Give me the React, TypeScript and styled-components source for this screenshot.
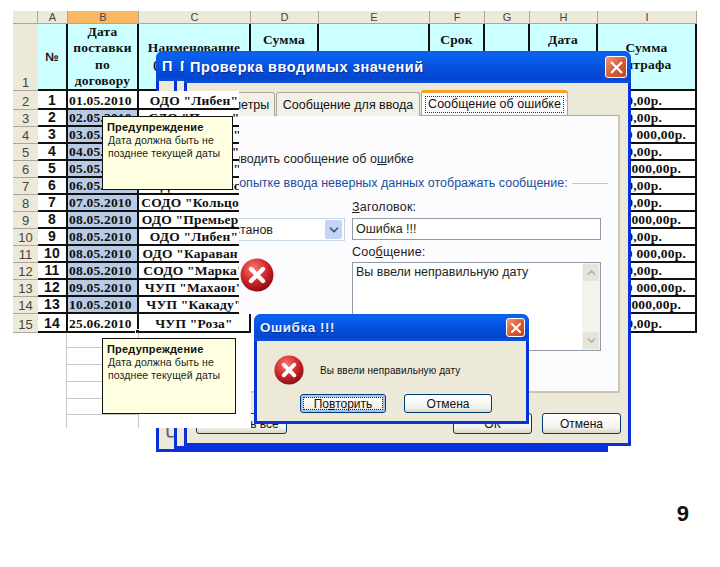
import React, { useId } from 'react';
import styled, { createGlobalStyle } from 'styled-components';
import { ChevronDown, ChevronUp, X } from 'lucide-react';

const GlobalStyle = createGlobalStyle`
  html, body { margin: 0; background: #fff; }
  * { box-sizing: border-box; }
`;

const UI_FONT = `"Liberation Sans", Arial, sans-serif`;
const CELL_FONT = `"Liberation Serif", "Times New Roman", serif`;

const Page = styled.div`
  width: 720px;
  height: 567px;
  padding: 11px 0 0 13px;
  display: flex;
  flex-direction: column;
  overflow: hidden;
  font-family: ${UI_FONT};
  color: #111;
`;

const Sheet = styled.div`
  display: grid;
  grid-template-columns: 25px 30px 71px 112px 68px 111px 55px 45px 68px 99px;
  grid-template-rows: 13px 67px 19px repeat(12, 17px) 19px 15px 17px 17px 17px 16px 13px;
  width: 684px;
`;

const ColHead = styled.div<{ $active?: boolean }>`
  background: ${(p) => (p.$active ? '#f8b962' : '#ece9d8')};
  border-right: 1px solid #aca899;
  border-bottom: 1px solid #aca899;
  font-size: 11px;
  line-height: 12px;
  text-align: center;
  color: #444;
`;

const RowHead = styled.div<{ $over?: boolean; $end?: boolean }>`
  position: ${(p) => (p.$over ? 'relative' : 'static')};
  z-index: ${(p) => (p.$over ? 3 : 'auto')};
  display: flex;
  align-items: flex-end;
  justify-content: center;
  background: #ece9d8;
  border-bottom: 1px solid #aca899;
  font-size: 13px;
  line-height: 15px;
  color: #444;
`;

const HeadCell = styled.div`
  display: flex;
  align-items: center;
  justify-content: center;
  background: #ccffff;
  border-right: 2px solid #111;
  border-bottom: 2px solid #111;
  padding: 0 1px;
  font: bold 13.5px/16.4px ${CELL_FONT};
  letter-spacing: 0.2px;
  text-align: center;
`;

const NumberHead = styled(HeadCell)`
  font: bold 12px/16px ${UI_FONT};
`;

const LowHead = styled(HeadCell)`
  padding-top: 5px;
`;

const Cell = styled.div<{ $over?: boolean; $clip?: boolean; $tone?: string; $plain?: boolean }>`
  position: ${(p) => (p.$over ? 'relative' : 'static')};
  z-index: ${(p) => (p.$over ? 3 : 'auto')};
  clip-path: ${(p) => (p.$clip ? 'inset(0 12px 0 0)' : 'none')};
  display: flex;
  align-items: flex-end;
  justify-content: center;
  background: ${(p) => p.$tone ?? '#fff'};
  border-right: 2px solid #111;
  border-bottom: 2px solid #111;
  font: ${(p) => (p.$plain ? 'bold 13.5px' : 'bold 13.5px')}/15px ${CELL_FONT};
  letter-spacing: 0.2px;
  white-space: nowrap;
`;

const IndexCell = styled(Cell)`
  font: bold 14px/15px ${UI_FONT};
`;

const DateCell = styled(Cell)`
  justify-content: flex-start;
  padding-left: 1px;
`;

const FineCell = styled(Cell)<{ $right: number }>`
  justify-content: flex-end;
  padding-right: ${(p) => p.$right}px;
`;

const BlankB = styled.div<{ $last?: boolean }>`
  grid-column: 3;
  position: relative;
  z-index: 3;
  background: #fff;
  margin-left: -2px;
  border-left: 1px solid #c8c8c8;
  border-right: 1px solid #c8c8c8;
  border-bottom: ${(p) => (p.$last ? 'none' : '1px solid #c8c8c8')};
`;

const BlankC = styled.div`
  position: relative;
  z-index: 3;
  background: #fff;
`;

const SelectionHandle = styled.span`
  position: absolute;
  right: -3px;
  bottom: -3px;
  width: 5px;
  height: 5px;
  background: #111;
  border: 1px solid #fff;
`;

const Footer = styled.div`
  margin-top: 74px;
  padding-right: 31px;
  text-align: right;
  font: bold 22px/24px ${UI_FONT};
  color: #111;
`;

const Win = styled.div<{ $left: number; $top: number; $w: number; $h: number; $z: number }>`
  position: absolute;
  left: ${(p) => p.$left}px;
  top: ${(p) => p.$top}px;
  width: ${(p) => p.$w}px;
  height: ${(p) => p.$h}px;
  z-index: ${(p) => p.$z};
  display: flex;
  flex-direction: column;
  background: #ece9d8;
  border: 3px solid #0831d9;
  border-top: none;
  border-radius: 7px 7px 0 0;
`;

const TitleBar = styled.div<{ $h: number }>`
  flex: none;
  height: ${(p) => p.$h}px;
  margin: 0 -3px;
  padding: 0 4px 0 6px;
  display: flex;
  align-items: center;
  justify-content: space-between;
  background: linear-gradient(180deg, #0a5be8 0%, #0a62f0 12%, #0550dc 55%, #0345d0 85%, #0a52dc 100%);
  border-radius: 7px 7px 0 0;
  color: #fff;
  font: bold 14.5px/18px ${UI_FONT};
  letter-spacing: 0.55px;
  text-shadow: 1px 1px 0 #0a2f9a;
  white-space: nowrap;
  overflow: hidden;
`;

const SmallTitle = styled(TitleBar)`
  font-size: 13.5px;
  letter-spacing: 0.5px;
  color: #e4f1ff;
`;

const CloseBox = styled.span<{ $size: number }>`
  flex: none;
  width: ${(p) => p.$size}px;
  height: ${(p) => p.$size}px;
  display: flex;
  align-items: center;
  justify-content: center;
  background: linear-gradient(135deg, #ee9a78 0%, #d9582f 55%, #c8451f 100%);
  border: 1px solid #fff;
  border-radius: 3px;
  color: #fff;
`;

const BackBody = styled.div`
  flex: 1;
  display: flex;
  align-items: flex-end;
  padding: 0 0 3px 6px;
  font: 20px/22px ${UI_FONT};
  color: #55657f;
`;

const DialogBody = styled.div`
  flex: 1;
  display: flex;
  flex-direction: column;
  padding: 8px 8px 0;
`;

const Tabs = styled.div`
  display: flex;
  height: 24px;
  padding-left: 2px;
  font-size: 12.5px;
`;

const Tab = styled.div<{ $w: number; $active?: boolean }>`
  width: ${(p) => p.$w}px;
  height: ${(p) => (p.$active ? 25 : 24)}px;
  margin-top: ${(p) => (p.$active ? -1 : 1)}px;
  display: flex;
  align-items: center;
  justify-content: center;
  position: relative;
  background: ${(p) => (p.$active ? '#fcfcfe' : '#f3f1e7')};
  border: 1px solid #aca899;
  border-bottom: none;
  border-top: ${(p) => (p.$active ? '3px solid #f7a22e' : '1px solid #aca899')};
  border-radius: 3px 3px 0 0;
  margin-right: ${(p) => (p.$active ? 0 : 1)}px;
  white-space: nowrap;
`;

const FocusLabel = styled.span`
  padding: 0 2px;
  outline: 1px dotted #333;
  line-height: 15px;
`;

const Panel = styled.div`
  height: 278px;
  padding: 35px 10px 0;
  background: #fcfcfe;
  border: 1px solid #aca899;
  border-right: 2px solid #c9c6b6;
  border-bottom: 2px solid #c9c6b6;
  font-size: 12.5px;
  line-height: 16px;
  color: #222;
`;

const CheckRow = styled.div`
  display: flex;
  align-items: center;
  gap: 4px;
`;

const CheckBox = styled.span`
  width: 13px;
  height: 13px;
  border: 1px solid #1c5180;
  background: #fff;
`;

const Underlined = styled.span`
  text-decoration: underline;
`;

const GroupRow = styled.div`
  margin-top: 8px;
  display: flex;
  align-items: center;
  gap: 4px;
  color: #1a4f9c;
  white-space: nowrap;
`;

const GroupLine = styled.span`
  flex: 1;
  height: 1px;
  background: #c9c6b6;
`;

const Columns = styled.div`
  margin-top: 8px;
  display: grid;
  grid-template-columns: 139px 249px;
  column-gap: 7px;
`;

const FieldLabel = styled.div`
  height: 19px;
  letter-spacing: 0.2px;
`;

const SelectBox = styled.div`
  height: 23px;
  padding: 1px 2px 1px 17px;
  display: flex;
  align-items: center;
  justify-content: space-between;
  background: #fff;
  border: 1px solid #c4d5e6;
`;

const SelectArrow = styled.span`
  width: 17px;
  height: 19px;
  display: flex;
  align-items: center;
  justify-content: center;
  background: #c5d4f4;
  border-radius: 2px;
  color: #3b4f86;
`;

const IconSlot = styled.div`
  margin: 17px 0 0 34px;
`;

const TextInput = styled.div`
  height: 22px;
  padding: 0 3px;
  display: flex;
  align-items: center;
  background: #fff;
  border: 1px solid #8f9ba6;
  margin-bottom: 4px;
`;

const TextArea = styled.div`
  position: relative;
  height: 89px;
  margin-top: -1px;
  padding: 1px 3px;
  background: #fff;
  border: 1px solid #8f9ba6;
`;

const ScrollBar = styled.div`
  position: absolute;
  right: 0;
  top: 0;
  bottom: 0;
  width: 18px;
  display: flex;
  flex-direction: column;
  justify-content: space-between;
  background: #f4f3ee;
  padding: 1px;
`;

const ScrollButton = styled.span`
  height: 17px;
  display: flex;
  align-items: center;
  justify-content: center;
  background: #e6e5dc;
  color: #b5b4aa;
`;

const DialogFooter = styled.div`
  flex: 1;
  padding: 20px 0 0 1px;
  display: flex;
  justify-content: space-between;
`;

const FooterRight = styled.div`
  display: flex;
  gap: 10px;
  margin-right: -1px;
`;

const XpButton = styled.div<{ $w: number; $h: number; $focus?: boolean }>`
  width: ${(p) => p.$w}px;
  height: ${(p) => p.$h}px;
  display: flex;
  align-items: center;
  justify-content: center;
  background: linear-gradient(180deg, #fff 0%, #f4f3ee 70%, #dcd8c8 100%);
  border: 1px solid #003c74;
  border-radius: 3px;
  box-shadow: ${(p) => (p.$focus ? 'inset 0 0 0 2px #a9c2ea' : 'none')};
  outline: ${(p) => (p.$focus ? '1px dotted #222' : 'none')};
  outline-offset: -4px;
  font-size: 12px;
  color: #111;
`;

const ErrorBody = styled.div`
  flex: 1;
  display: flex;
  flex-direction: column;
  padding: 14px 0 0 17px;
`;

const ErrorRow = styled.div`
  display: flex;
  align-items: center;
  gap: 16px;
  font-size: 10px;
  letter-spacing: 0.1px;
`;

const ErrorButtons = styled.div`
  margin: 9px 0 0 26px;
  display: flex;
  gap: 18px;
`;

const Tip = styled.div<{ $top: number; $h: number; $w: number }>`
  position: absolute;
  left: 102px;
  top: ${(p) => p.$top}px;
  width: ${(p) => p.$w}px;
  height: ${(p) => p.$h}px;
  z-index: 6;
  padding: 3px 4px;
  background: #ffffe1;
  border: 1px solid #111;
  font-size: 10.5px;
  line-height: 13px;
  color: #222;
`;

const TipTitle = styled.div`
  font: bold 11px/14px ${UI_FONT};
  letter-spacing: 0.2px;
  color: #111;
`;

const TipText = styled.div`
  padding-left: 1px;
  letter-spacing: 0.1px;
  white-space: nowrap;
`;

const ErrorIcon: React.FC<{ size: number }> = ({ size }) => {
  const id = useId();
  return (
    <svg width={size} height={size} viewBox="0 0 34 34" style={{ display: 'block' }}>
      <defs>
        <radialGradient id={id} cx="40%" cy="30%" r="75%">
          <stop offset="0%" stopColor="#f47a6c" />
          <stop offset="55%" stopColor="#d3252a" />
          <stop offset="100%" stopColor="#7d0d12" />
        </radialGradient>
      </defs>
      <circle cx="17" cy="17" r="16.5" fill={`url(#${id})`} />
      <path d="M11 11 L23 23 M23 11 L11 23" stroke="#fff" strokeWidth="4.4" strokeLinecap="round" />
    </svg>
  );
};

const COLS = ['A', 'B', 'C', 'D', 'E', 'F', 'G', 'H', 'I'];

const ROWS = [
  { date: '01.05.2010', name: 'ОДО "Либен"', fine: '0,00р.', right: 33 },
  { date: '02.05.2010', name: 'СДО "Прима"', fine: '0,00р.', right: 33 },
  { date: '03.05.2010', name: 'ОДО "Каскад"', fine: '0 000,00р.', right: 9 },
  { date: '04.05.2010', name: 'ОДО "Альфа"', fine: '0,00р.', right: 33 },
  { date: '05.05.2010', name: 'ОДО "Вектор"', fine: '000,00р.', right: 14 },
  { date: '06.05.2010', name: 'СОДО "Импэкс"', fine: '0,00р.', right: 33 },
  { date: '07.05.2010', name: 'СОДО "Кольцо"', fine: '0,00р.', right: 33 },
  { date: '08.05.2010', name: 'ОДО "Премьер"', fine: '000,00р.', right: 14 },
  { date: '08.05.2010', name: 'ОДО "Либен"', fine: '0,00р.', right: 33 },
  { date: '08.05.2010', name: 'ОДО "Караван"', fine: '0 000,00р.', right: 9 },
  { date: '08.05.2010', name: 'СОДО "Марка"', fine: '0,00р.', right: 33 },
  { date: '09.05.2010', name: 'ЧУП "Махаон"', fine: '0 000,00р.', right: 9 },
  { date: '10.05.2010', name: 'ЧУП "Какаду"', fine: '000,00р.', right: 14 },
  { date: '25.06.2010', name: 'ЧУП "Роза"', fine: '0,00р.', right: 33 },
];

const BLANK_ROWS = [0, 1, 2, 3, 4, 5];

const App: React.FC = () => (
  <Page>
    <GlobalStyle />
    <Sheet>
      <ColHead />
      {COLS.map((c) => (
        <ColHead key={c} $active={c === 'B'}>
          {c}
        </ColHead>
      ))}

      <RowHead>1</RowHead>
      <NumberHead>№</NumberHead>
      <HeadCell>
        Дата
        <br />
        поставки
        <br />
        по
        <br />
        договору
      </HeadCell>
      <HeadCell>
        Наименование
        <br />
        (покупателя)
      </HeadCell>
      <HeadCell>
        Сумма
        <br />
        поставки
        <br />
        &nbsp;
      </HeadCell>
      <LowHead>Сумма договора</LowHead>
      <HeadCell>
        Срок
        <br />
        оплаты
        <br />
        &nbsp;
      </HeadCell>
      <LowHead>Пеня</LowHead>
      <HeadCell>
        Дата
        <br />
        оплаты
        <br />
        &nbsp;
      </HeadCell>
      <HeadCell>Сумма штрафа</HeadCell>

      {ROWS.map((r, i) => {
        const last = i === ROWS.length - 1;
        return (
          <React.Fragment key={i}>
            <RowHead $over>{i + 2}</RowHead>
            <IndexCell $over>{i + 1}</IndexCell>
            <DateCell $over $plain={last} $tone={i === 0 || last ? '#fff' : '#b7cbe6'}>
              {r.date}
              {last && <SelectionHandle />}
            </DateCell>
            <Cell $over $clip={!last}>
              {r.name}
            </Cell>
            <Cell />
            <Cell />
            <Cell />
            <Cell />
            <Cell />
            <FineCell $right={r.right}>{r.fine}</FineCell>
          </React.Fragment>
        );
      })}

      {BLANK_ROWS.map((n) => (
        <React.Fragment key={n}>
          <BlankB $last={n === BLANK_ROWS.length - 1} />
          <BlankC />
        </React.Fragment>
      ))}
    </Sheet>

    <Footer>9</Footer>

    <Win $left={156} $top={51} $w={452} $h={401} $z={1}>
      <TitleBar $h={30}>П</TitleBar>
      <BackBody>Ч</BackBody>
    </Win>
    <Win $left={174} $top={51} $w={434} $h={398} $z={1}>
      <TitleBar $h={30}>П</TitleBar>
    </Win>

    <Win $left={184} $top={51} $w={447} $h={395} $z={2}>
      <TitleBar $h={32}>
        Проверка вводимых значений
        <CloseBox $size={22}>
          <X size={19} strokeWidth={3} />
        </CloseBox>
      </TitleBar>
      <DialogBody>
        <Tabs>
          <Tab $w={78}>Параметры</Tab>
          <Tab $w={144}>Сообщение для ввода</Tab>
          <Tab $w={147} $active>
            <FocusLabel>Сообщение об ошибке</FocusLabel>
          </Tab>
        </Tabs>
        <Panel>
          <CheckRow>
            <CheckBox />
            <span>
              Выводить сообщение об о<Underlined>ш</Underlined>ибке
            </span>
          </CheckRow>
          <GroupRow>
            При попытке ввода неверных данных отображать сообщение:
            <GroupLine />
          </GroupRow>
          <Columns>
            <div>
              <FieldLabel>Вид:</FieldLabel>
              <SelectBox>
                Останов
                <SelectArrow>
                  <ChevronDown size={14} strokeWidth={3} />
                </SelectArrow>
              </SelectBox>
              <IconSlot>
                <ErrorIcon size={34} />
              </IconSlot>
            </div>
            <div>
              <FieldLabel>
                <Underlined>З</Underlined>аголовок:
              </FieldLabel>
              <TextInput>Ошибка !!!</TextInput>
              <FieldLabel>
                Соо<Underlined>б</Underlined>щение:
              </FieldLabel>
              <TextArea>
                Вы ввели неправильную дату
                <ScrollBar>
                  <ScrollButton>
                    <ChevronUp size={13} strokeWidth={3} />
                  </ScrollButton>
                  <ScrollButton>
                    <ChevronDown size={13} strokeWidth={3} />
                  </ScrollButton>
                </ScrollBar>
              </TextArea>
            </div>
          </Columns>
        </Panel>
        <DialogFooter>
          <XpButton $w={91} $h={21}>
            Очистить все
          </XpButton>
          <FooterRight>
            <XpButton $w={79} $h={21}>
              ОК
            </XpButton>
            <XpButton $w={79} $h={21}>
              Отмена
            </XpButton>
          </FooterRight>
        </DialogFooter>
      </DialogBody>
    </Win>

    <Win $left={254} $top={314} $w={275} $h={110} $z={5}>
      <SmallTitle $h={27}>
        Ошибка !!!
        <CloseBox $size={19}>
          <X size={16} strokeWidth={3} />
        </CloseBox>
      </SmallTitle>
      <ErrorBody>
        <ErrorRow>
          <ErrorIcon size={30} />
          Вы ввели неправильную дату
        </ErrorRow>
        <ErrorButtons>
          <XpButton $w={86} $h={19} $focus>
            <span>
              По<Underlined>в</Underlined>торить
            </span>
          </XpButton>
          <XpButton $w={88} $h={19}>
            Отмена
          </XpButton>
        </ErrorButtons>
      </ErrorBody>
    </Win>

    <Tip $top={116} $w={131} $h={74}>
      <TipTitle>Предупреждение</TipTitle>
      <TipText>
        Дата должна быть не
        <br />
        позднее текущей даты
      </TipText>
    </Tip>
    <Tip $top={338} $w={134} $h={76}>
      <TipTitle>Предупреждение</TipTitle>
      <TipText>
        Дата должна быть не
        <br />
        позднее текущей даты
      </TipText>
    </Tip>
  </Page>
);

export default App;
